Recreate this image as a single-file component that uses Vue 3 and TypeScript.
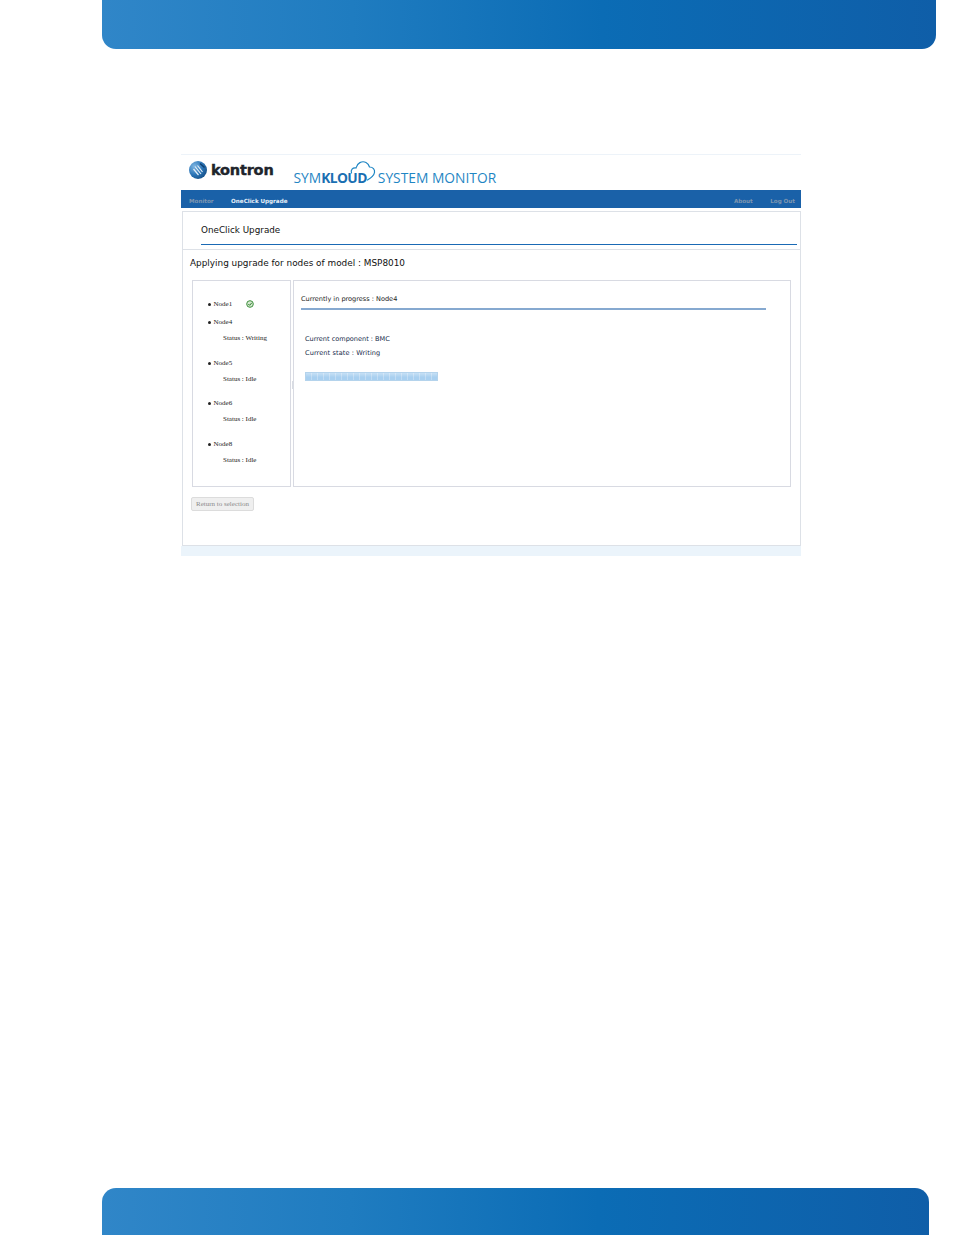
<script setup lang="ts">
interface NodeItem { name: string; status?: string; done?: boolean }
const nodes: NodeItem[] = [
  { name: 'Node1', done: true },
  { name: 'Node4', status: 'Writing' },
  { name: 'Node5', status: 'Idle' },
  { name: 'Node6', status: 'Idle' },
  { name: 'Node8', status: 'Idle' },
]
</script>

<template>
  <div class="page">
    <div class="band band-top"></div>

    <main class="shot">
      <header class="brand">
        <div class="kontron">
          <svg class="globe" width="18" height="18" viewBox="0 0 18 18">
            <defs>
              <radialGradient id="g" cx="0.3" cy="0.3" r="0.85">
                <stop offset="0" stop-color="#7fb6e2" />
                <stop offset="0.55" stop-color="#2a74b6" />
                <stop offset="1" stop-color="#134a80" />
              </radialGradient>
            </defs>
            <circle cx="9" cy="9" r="9" fill="url(#g)" />
            <path d="M6 5.500l6 7.500M8.500 4.500l5 6.500M4.500 8l5 6" stroke="#e4eef7" stroke-width="1.200" fill="none" />
            <path d="M11 2.500l4.500 4" stroke="#0f3f70" stroke-width="1.500" fill="none" />
          </svg>
          <span class="kontron-word">kontron</span>
        </div>
        <div class="product">
          <span>SYM</span><b>KLOUD</b>
          <svg class="cloud" width="26" height="22" viewBox="0 0 26 22">
            <path d="M1.500 13C.5 10 2.500 7.500 6 8 7 3 12 .5 16 2.500c2 1 3 2.500 3.500 4.500 3.500 0 5.500 2.500 5 5.500-.5 3-3.500 5.500-7 7.500" fill="none" stroke="#1f86c4" stroke-width="1.200" stroke-linecap="round" />
          </svg>
          <span class="after">SYSTEM MONITOR</span>
        </div>
      </header>

      <nav class="nav">
        <span class="nav-item dim">Monitor</span>
        <span class="nav-item active">OneClick Upgrade</span>
        <span class="spacer"></span>
        <span class="nav-item dim">About</span>
        <span class="nav-item dim logout">Log Out</span>
      </nav>

      <section class="content">
        <div class="title-wrap">
          <h1 class="title">OneClick Upgrade</h1>
        </div>
        <div class="body">
          <p class="applying">Applying upgrade for nodes of model : MSP8010</p>
          <div class="panels">
            <aside class="left">
              <ul class="list">
                <li v-for="n in nodes" :key="n.name" class="node" :class="{ 'has-status': n.status }">
                  <div class="node-line">
                    <span class="bullet"></span>
                    <span>{{ n.name }}</span>
                    <svg v-if="n.done" class="check" width="8" height="8" viewBox="0 0 8 8">
                      <circle cx="4" cy="4" r="3.300" fill="#d5ead0" stroke="#3f8f3f" stroke-width="1" />
                      <path d="M2.300 4l1.300 1.300 2.200-2.500" fill="none" stroke="#2c7a2c" stroke-width="1" />
                    </svg>
                  </div>
                  <div v-if="n.status" class="status">Status : {{ n.status }}</div>
                </li>
              </ul>
            </aside>
            <div class="right">
              <div class="progress-head">Currently in progress : Node4</div>
              <div class="detail">Current component : BMC</div>
              <div class="detail second">Current state : Writing</div>
              <div class="bar"></div>
              <span class="splitter"></span>
            </div>
          </div>
          <button class="back" type="button">Return to selection</button>
        </div>
      </section>
      <div class="foot"></div>
    </main>

    <div class="band band-bottom"></div>
  </div>
</template>

<style>
html, body { margin: 0; background: #fff; }
</style>

<style scoped>
.page {
  width: 954px;
  height: 1235px;
  display: flex;
  flex-direction: column;
  overflow: hidden;
  background: #fff;
}
.band {
  margin-left: 102px;
  background: linear-gradient(90deg, #3086c8 0%, #1f7cc0 30%, #0b6cb5 60%, #0f5ea8 100%);
}
.band-top { width: 834px; height: 49px; border-radius: 0 0 14px 14px; }
.band-bottom { width: 827px; height: 47px; border-radius: 14px 14px 0 0; margin-top: auto; }

.shot {
  width: 620px;
  margin: 105px 0 0 181px;
  font-family: "DejaVu Sans", Verdana, sans-serif;
}
.brand {
  height: 35px;
  border-top: 1px solid #edf3f9;
  display: flex;
  position: relative;
}
.kontron {
  display: flex;
  align-items: center;
  gap: 4px;
  margin: 6px 0 0 8px;
  height: 18px;
}
.kontron-word {
  font-family: "DejaVu Sans", sans-serif;
  font-weight: 700;
  font-size: 14.500px;
  letter-spacing: -0.2px;
  color: #20242b;
  -webkit-text-stroke: 0.4px #20242b;
}
.product {
  margin: 6px 0 0 20px;
  display: flex;
  align-items: flex-end;
  height: 25px;
  font-family: "Open Sans", sans-serif;
  font-size: 13.800px;
  line-height: 16px;
  color: #1f86c4;
  white-space: nowrap;
  position: relative;
}
.product b { font-weight: 700; color: #1a6fb2; letter-spacing: -0.6px; }
.cloud { position: absolute; left: 56px; top: -1px; }
.after { margin-left: 11px; }

.nav {
  height: 18px;
  background: #1a61a8;
  display: flex;
  align-items: center;
  padding: 4px 6px 0 8px;
  box-sizing: border-box;
  font-size: 5.600px;
  font-weight: 700;
  gap: 17.500px;
}
.nav-item { white-space: nowrap; }
.dim { color: #7f96b0; }
.active { color: #e8f0f8; }
.spacer { flex: 1; }

.content {
  margin: 3px 0 0 1px;
  height: 335px;
  box-sizing: border-box;
  border: 1px solid #dde1e7;
  background: #fff;
}
.title-wrap {
  height: 37px;
  border-bottom: 1px solid #dde1e7;
  padding: 0 3px 0 18px;
}
.title {
  margin: 0;
  height: 33px;
  box-sizing: border-box;
  border-bottom: 1px solid #1a6ab5;
  padding: 11px 0 0 0;
  font-weight: 400;
  font-size: 8.800px;
  line-height: 14px;
  color: #111;
}
.body { padding: 0 9px 0 7px; }
.applying {
  margin: 0;
  padding-top: 6px;
  font-size: 8.900px;
  line-height: 14px;
  color: #111;
}
.panels {
  display: flex;
  gap: 2px;
  margin: 10px 0 0 2px;
  height: 207px;
}
.left, .right {
  box-sizing: border-box;
  border: 1px solid #d8dae2;
  height: 100%;
}
.left { width: 99px; }
.right {
  width: 498px;
  padding: 13px 0 0 7px;
  position: relative;
  font-size: 6.550px;
  color: #1a2333;
}
.list {
  list-style: none;
  margin: 0;
  padding: 19px 0 0 15px;
  font-family: "Liberation Serif", serif;
  font-size: 7px;
  color: #222;
}
.node { margin-bottom: 9px; }
.node.has-status { margin-bottom: 15.700px; }
.node-line {
  display: flex;
  align-items: center;
  height: 9px;
  line-height: 9px;
}
.bullet {
  width: 3px;
  height: 3px;
  border-radius: 50%;
  background: #222;
  margin-right: 2.500px;
}
.check { margin-left: 14px; margin-top: -2px; }
.status {
  margin: 7px 0 0 15px;
  height: 9px;
  line-height: 9px;
}
.progress-head {
  width: 465px;
  height: 16px;
  box-sizing: border-box;
  border-bottom: 2px solid #86a9d0;
  line-height: 10px;
  color: #222;
}
.detail {
  margin: 25px 0 0 4px;
  line-height: 8px;
  color: #162a4a;
}
.detail.second { margin-top: 6px; letter-spacing: 0.1px; }
.bar {
  margin: 15px 0 0 4px;
  width: 133px;
  height: 9px;
  box-sizing: border-box;
  border: 1px solid #b4d3ec;
  background:
    linear-gradient(180deg, rgba(255, 255, 255, 0.35), rgba(255, 255, 255, 0) 60%),
    repeating-linear-gradient(90deg, #a9d0f0 0 5px, #c2dcf3 5px 6px);
}
.splitter {
  position: absolute;
  left: -2px;
  top: 100px;
  width: 2px;
  height: 8px;
  background: #d9dce3;
}
.back {
  display: block;
  margin: 10px 0 0 1px;
  width: 63px;
  height: 14px;
  padding: 0;
  border: 1px solid #dcdcdc;
  border-radius: 2px;
  background: #efefef;
  font-family: "Liberation Serif", serif;
  font-size: 7px;
  color: #8a8a8a;
}
.foot { height: 10px; background: #ebf4fb; }
</style>
